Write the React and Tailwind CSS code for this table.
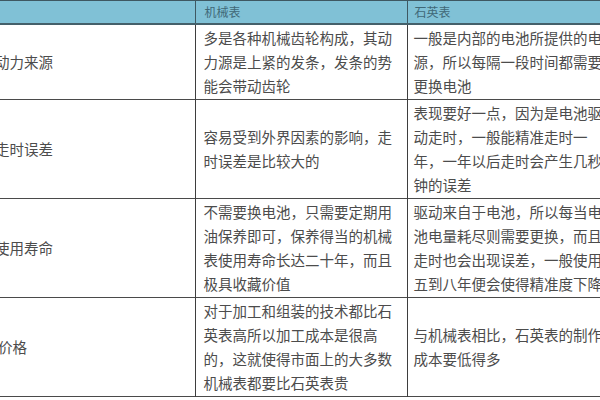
import React from "react";

const rows = [
  {
    name: "动力来源",
    mech: "多是各种机械齿轮构成，其动力源是上紧的发条，发条的势能会带动齿轮",
    quartz: "一般是内部的电池所提供的电源，所以每隔一段时间都需要更换电池",
  },
  {
    name: "走时误差",
    mech: "容易受到外界因素的影响，走时误差是比较大的",
    quartz: "表现要好一点，因为是电池驱动走时，一般能精准走时一年，一年以后走时会产生几秒钟的误差",
  },
  {
    name: "使用寿命",
    mech: "不需要换电池，只需要定期用油保养即可，保养得当的机械表使用寿命长达二十年，而且极具收藏价值",
    quartz: "驱动来自于电池，所以每当电池电量耗尽则需要更换，而且走时也会出现误差，一般使用五到八年便会使得精准度下降",
  },
  {
    name: "价格",
    mech: "对于加工和组装的技术都比石英表高所以加工成本是很高的，这就使得市面上的大多数机械表都要比石英表贵",
    quartz: "与机械表相比，石英表的制作成本要低得多",
    pad: true,
  },
];

export default function App() {
  return (
    <div
      className="w-[600px] h-[400px] overflow-hidden bg-white"
      style={{ fontFamily: '"Noto Sans CJK SC", "Noto Sans", sans-serif' }}
    >
      <table className="-ml-[13px] w-[634px] table-fixed border-collapse text-left">
        <colgroup>
          <col className="w-[208px]" />
          <col className="w-[212px]" />
          <col className="w-[214px]" />
        </colgroup>
        <thead>
          <tr className="bg-[#80c1d6] border-t border-[#3e5862] border-b-2 border-b-[#44606a]">
            <th className="h-[23px] p-0 font-normal border-r border-[#3e5862]"></th>
            <th className="h-[23px] py-0 pl-[9px] font-normal text-[12px] text-[#3f6877] border-r border-[#3e5862]">
              机械表
            </th>
            <th className="h-[23px] py-0 pl-[7px] font-normal text-[12px] text-[#3f6877]">
              石英表
            </th>
          </tr>
        </thead>
        <tbody className="text-[14.5px] leading-[24px] text-[#4c4c4c]">
          {rows.map((r) => (
            <tr key={r.name} className="border-b border-[#4a4a4a]">
              <td
                className={
                  r.pad
                    ? "py-px pl-[11px] pr-2 align-middle border-r border-[#3e3e3e]"
                    : "py-px pl-[8px] pr-2 align-middle border-r border-[#3e3e3e]"
                }
              >
                {r.name}
              </td>
              <td className="py-px pl-[8px] pr-[8px] align-middle border-r border-[#3e3e3e]">
                {r.mech}
              </td>
              <td className="py-px pl-[6px] pr-[8px] align-middle">{r.quartz}</td>
            </tr>
          ))}
        </tbody>
      </table>
    </div>
  );
}
